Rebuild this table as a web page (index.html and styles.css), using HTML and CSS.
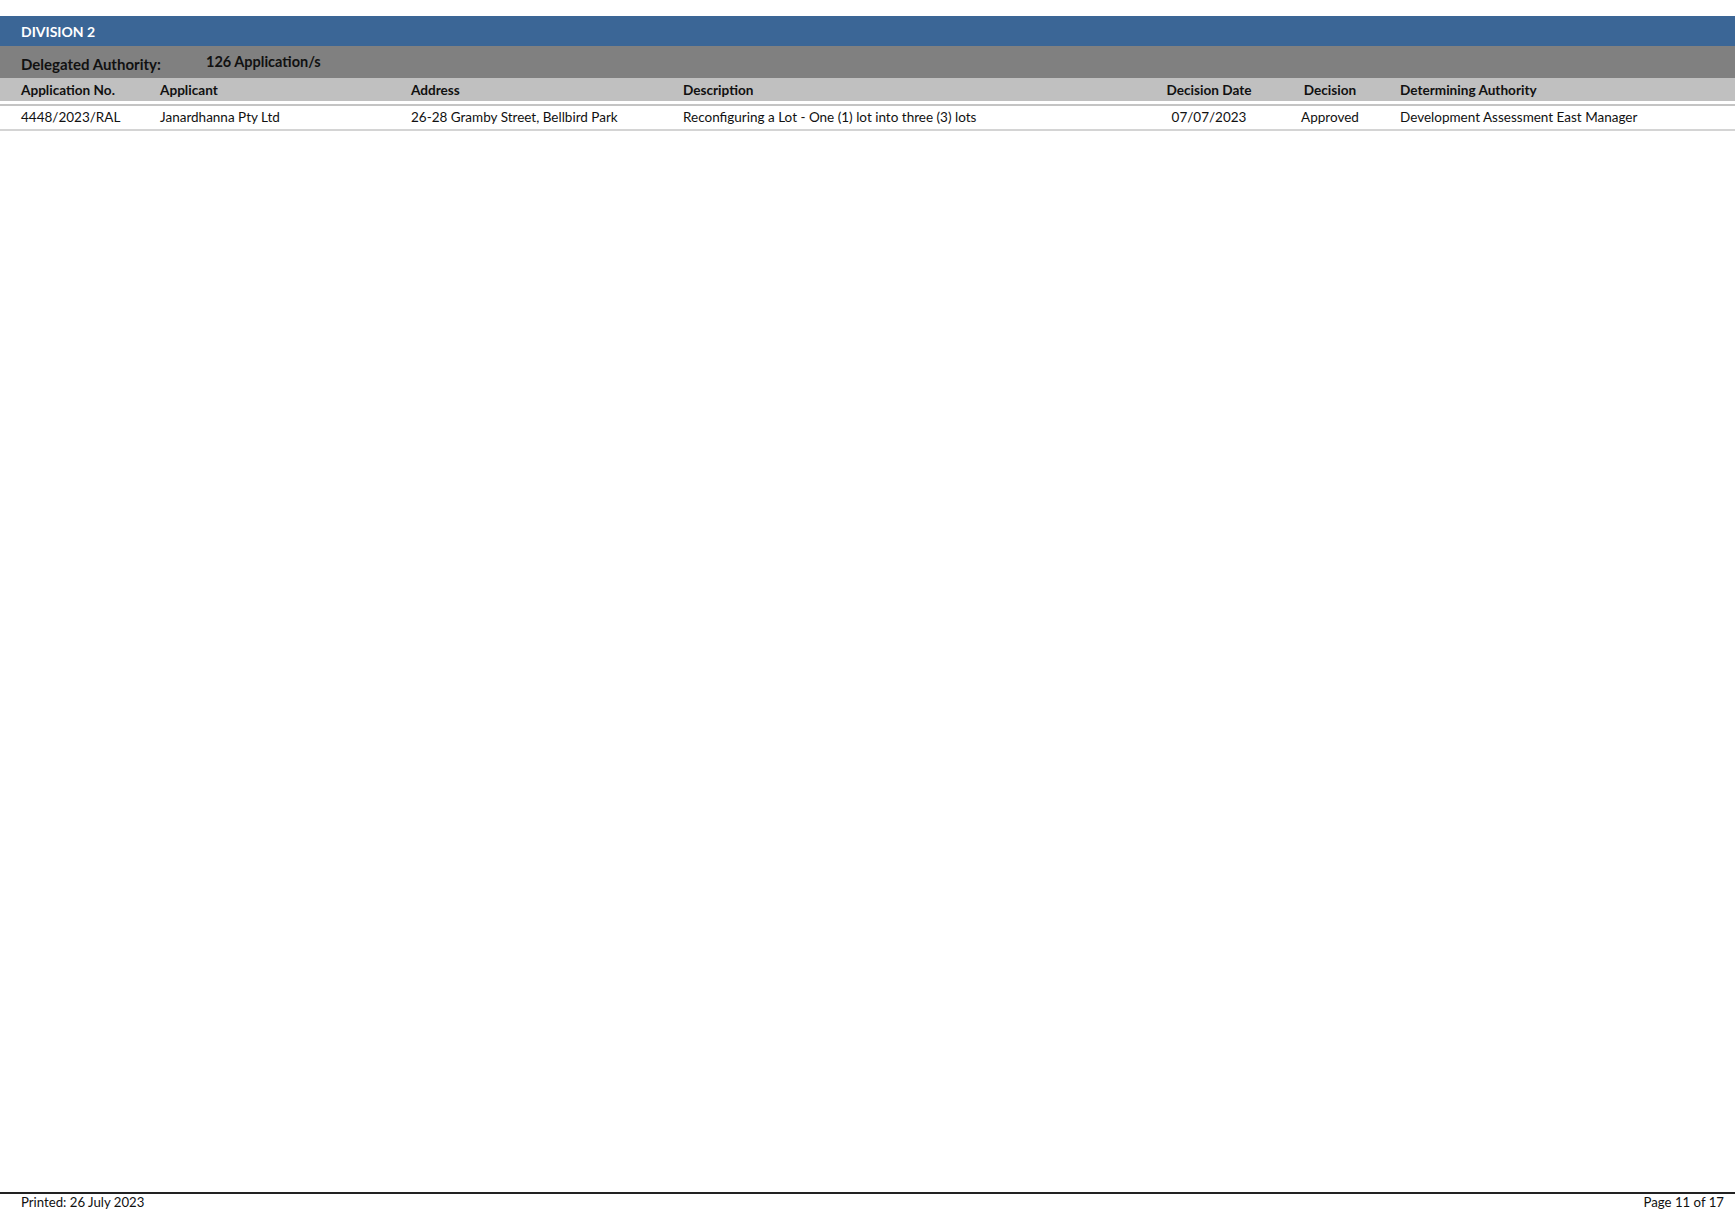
FILE: index.html
```html
<!DOCTYPE html>
<html lang="en">
<head>
<meta charset="utf-8">
<title>Division 2</title>
<link rel="stylesheet" href="styles.css">
</head>
<body>
<div class="page">
  <div class="report">
    <div class="division">DIVISION 2</div>
    <div class="authority">
      <span class="auth-label">Delegated Authority:</span>
      <span class="auth-count">126 Application/s</span>
    </div>
    <div class="grid head">
      <div>Application No.</div>
      <div>Applicant</div>
      <div>Address</div>
      <div>Description</div>
      <div class="center">Decision Date</div>
      <div class="center">Decision</div>
      <div>Determining Authority</div>
    </div>
    <div class="grid row">
      <div>4448/2023/RAL</div>
      <div>Janardhanna Pty Ltd</div>
      <div>26-28 Gramby Street, Bellbird Park</div>
      <div>Reconfiguring a Lot - One (1) lot into three (3) lots</div>
      <div class="center">07/07/2023</div>
      <div class="center">Approved</div>
      <div>Development Assessment East Manager</div>
    </div>
  </div>
  <div class="footer">
    <span>Printed: 26 July 2023</span>
    <span>Page 11 of 17</span>
  </div>
</div>
</body>
</html>
```

FILE: styles.css
```css
html, body {
  margin: 0;
  padding: 0;
  background: #ffffff;
}
body {
  font-family: Lato, "Open Sans", "Liberation Sans", sans-serif;
  color: #111111;
  font-size: 13.5px;
}
.page {
  width: 1735px;
  height: 1227px;
  display: flex;
  flex-direction: column;
  justify-content: space-between;
}
.report {
  padding-top: 16px;
}
.division {
  background: #3b6696;
  color: #ffffff;
  font-weight: 700;
  font-size: 14px;
  height: 30px;
  line-height: 32px;
  padding-left: 21px;
}
.authority {
  background: #808080;
  height: 32px;
  display: flex;
  align-items: center;
  padding-left: 21px;
  font-weight: 700;
  font-size: 15px;
  color: #111111;
}
.auth-label {
  width: 185px;
  padding-top: 3px;
}
.auth-count {
  font-size: 14.5px;
  padding-bottom: 1px;
}
.grid {
  display: grid;
  grid-template-columns: 139px 251px 272px 475px 102px 140px 1fr;
  padding-left: 21px;
  align-items: center;
}
.center {
  text-align: center;
}
.head {
  background: #c0c0c0;
  height: 23px;
  padding-top: 1px;
  box-sizing: border-box;
  font-weight: 700;
  font-size: 13.6px;
  margin-bottom: 3px;
}
.row {
  height: 21px;
  padding-bottom: 2px;
  border-top: 2px solid #c4c4c4;
  border-bottom: 2px solid #d4d4d4;
}
.footer {
  border-top: 2px solid #222222;
  margin-bottom: 17px;
  display: flex;
  justify-content: space-between;
  padding: 0 11px 0 21px;
  font-size: 13.2px;
  line-height: 16px;
  height: 16px;
}
```
